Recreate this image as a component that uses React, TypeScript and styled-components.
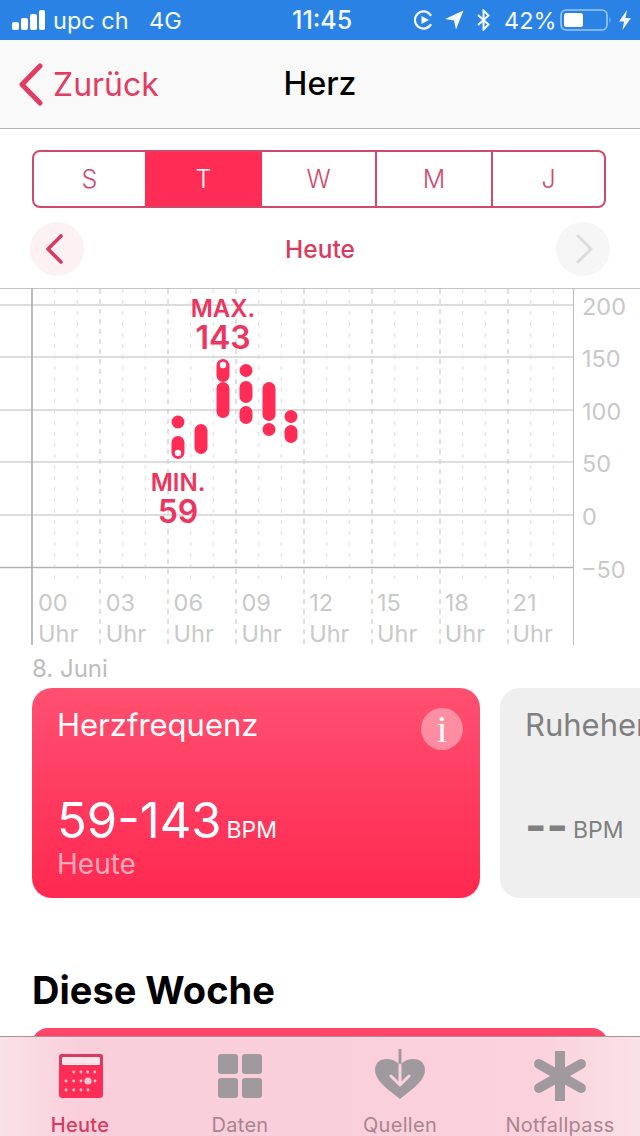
import React from "react";
import styled, { createGlobalStyle } from "styled-components";

const Global = createGlobalStyle`
  html, body { margin: 0; padding: 0; background: #fff; }
  body { font-family: Inter, Roboto, "Liberation Sans", sans-serif; }
  * { box-sizing: border-box; }
`;

const Page = styled.div`
  position: relative;
  width: 640px;
  height: 1136px;
  overflow: hidden;
  background: #fff;
`;

const StatusBar = styled.div`
  display: flex;
  align-items: center;
  height: 40px;
  padding: 0 9px 0 12px;
  background: #2a82e4;
  color: #f4f9ff;
  font-size: 23.5px;
`;
const StatusText = styled.span<{ $ml?: number; $w?: number; $weight?: number; $size?: number }>`
  margin-left: ${(p) => p.$ml ?? 0}px;
  width: ${(p) => (p.$w ? `${p.$w}px` : "auto")};
  font-weight: ${(p) => p.$weight ?? 400};
  font-size: ${(p) => (p.$size ? `${p.$size}px` : "inherit")};
  white-space: nowrap;
`;
const StatusIcon = styled.svg<{ $ml?: number }>`
  display: block;
  flex: none;
  margin-left: ${(p) => p.$ml ?? 0}px;
`;

const NavBar = styled.div`
  position: relative;
  display: flex;
  align-items: center;
  justify-content: center;
  height: 89px;
  background: #f9f9f9;
  border-bottom: 1px solid #b4b4b4;
`;
const BackLink = styled.div`
  position: absolute;
  left: 18px;
  top: 23px;
  display: flex;
  align-items: center;
  gap: 10px;
  color: #e23c62;
  font-size: 32px;
  line-height: 42px;
`;
const NavTitle = styled.div`
  color: #000;
  font-size: 32px;
  font-weight: 500;
  line-height: 42px;
`;

const Segments = styled.div`
  display: grid;
  grid-template-columns: 111px 117px 113px 116px 1fr;
  height: 58px;
  margin: 21px 34px 0 32px;
  border: 2px solid #cf4a6d;
  border-radius: 8px;
  overflow: hidden;
`;
const Segment = styled.div<{ $active?: boolean; $divider?: boolean }>`
  display: flex;
  align-items: center;
  justify-content: center;
  font-size: 25px;
  font-weight: 300;
  margin: ${(p) => (p.$active ? "-2px 0" : "0")};
  background: ${(p) => (p.$active ? "#ff2d55" : "transparent")};
  color: ${(p) => (p.$active ? "#fff" : "#cf4a6d")};
  border-left: ${(p) => (p.$divider ? "2px solid #cf4a6d" : "none")};
`;

const DayRow = styled.div`
  display: flex;
  align-items: center;
  justify-content: space-between;
  height: 54px;
  margin: 14px 30px 0 30px;
`;
const RoundButton = styled.div<{ $tone: string; $shift: number }>`
  display: flex;
  align-items: center;
  justify-content: center;
  width: 54px;
  height: 54px;
  padding-left: ${(p) => (p.$shift > 0 ? p.$shift : 0)}px;
  padding-right: ${(p) => (p.$shift < 0 ? -p.$shift : 0)}px;
  border-radius: 50%;
  background: ${(p) => p.$tone};
`;
const DayLabel = styled.div`
  color: #d93a60;
  font-size: 24.5px;
  font-weight: 500;
`;

const Chart = styled.svg`
  display: block;
  width: 640px;
  height: 357px;
  margin-top: 12px;
  overflow: visible;
`;
const AxisText = styled.text`
  fill: #c9c9c9;
  font-size: 23.5px;
  font-family: Inter, sans-serif;
`;
const MarkerText = styled.text<{ $size: number }>`
  fill: #ec3560;
  font-size: ${(p) => p.$size}px;
  font-weight: 600;
  font-family: Inter, sans-serif;
  text-anchor: middle;
`;

const DateLabel = styled.div`
  height: 43px;
  padding: 9px 0 0 32px;
  color: #bdbdbd;
  font-size: 24px;
  line-height: 30px;
`;

const CardRow = styled.div`
  display: flex;
  gap: 20px;
  padding-left: 32px;
  overflow: hidden;
`;
const Card = styled.div<{ $muted?: boolean }>`
  position: relative;
  flex: none;
  width: 448px;
  height: 210px;
  padding: 18px 25px 0;
  border-radius: 20px;
  background: ${(p) => (p.$muted ? "#efefef" : "linear-gradient(180deg, #ff5070 0%, #ff2850 100%)")};
  color: ${(p) => (p.$muted ? "#808080" : "#fff")};
`;
const CardTitle = styled.div`
  font-size: 31px;
  line-height: 38px;
  white-space: nowrap;
`;
const InfoBadge = styled.div`
  position: absolute;
  top: 20px;
  right: 17px;
  width: 42px;
  height: 42px;
  border-radius: 50%;
  display: flex;
  align-items: center;
  justify-content: center;
  background: rgba(255, 255, 255, 0.38);
  color: #fff;
  font-family: "Liberation Serif", serif;
  font-weight: 400;
  font-size: 38px;
`;
const ValueRow = styled.div`
  display: flex;
  align-items: baseline;
  gap: 5px;
  height: 60px;
  margin-top: 47px;
`;
const Value = styled.span`
  font-size: 49px;
  line-height: 60px;
`;
const DashValue = styled.span`
  font-size: 46px;
  font-weight: 700;
  line-height: 60px;
  transform: translateY(4px);
`;
const Unit = styled.span`
  font-size: 23px;
`;
const CardCaption = styled.div`
  color: #ffa9ba;
  font-size: 28px;
  line-height: 32px;
  margin-top: -3px;
`;

const SectionTitle = styled.h2`
  margin: 70px 0 0;
  padding-left: 32px;
  color: #000;
  font-size: 38px;
  font-weight: 700;
  line-height: 44px;
`;
const NextCard = styled.div`
  height: 60px;
  margin: 16px 32px 0;
  border-radius: 16px 16px 0 0;
  background: #ff4569;
`;

const TabBar = styled.nav`
  position: absolute;
  left: 0;
  right: 0;
  bottom: 0;
  height: 100px;
  display: grid;
  grid-template-columns: repeat(4, 160px);
  border-top: 1px solid rgba(90, 50, 60, 0.45);
  background: linear-gradient(90deg, #f9e2e7 0%, #facfdc 12%, #facfdc 50%, #fbd2dd 85%, #f9e2e7 100%);
`;
const Tab = styled.div<{ $active?: boolean }>`
  display: flex;
  flex-direction: column;
  align-items: center;
  color: ${(p) => (p.$active ? "#d93a60" : "#a8858f")};
  font-size: 20px;
  font-weight: ${(p) => (p.$active ? 500 : 400)};
  letter-spacing: 0.3px;
`;
const TabIcon = styled.svg`
  display: block;
  width: 60px;
  height: 60px;
  margin-top: 10px;
`;
const TabLabel = styled.span`
  line-height: 24px;
  margin-top: 6px;
  white-space: nowrap;
`;

const hourTicks = Array.from({ length: 23 }, (_, i) => i + 1);
const labels = ["00", "03", "06", "09", "12", "15", "18", "21"];
const yLabels: [string, number, number][] = [
  ["200", 582, 315],
  ["150", 582, 367],
  ["100", 582, 420],
  ["50", 582, 472],
  ["0", 582, 525],
  ["\u221250", 581, 578],
];
const yLines = [305, 357, 410, 462, 515];

type Pill = [number, number, number];
const pills: Pill[] = [
  [178, 415.5, 428.5],
  [178, 436, 459],
  [201, 424, 454],
  [223, 359, 382],
  [223, 382, 418],
  [246, 364, 377],
  [246, 381, 403],
  [246, 406, 424],
  [269, 382, 421],
  [269, 423, 436],
  [291, 410, 423],
  [291, 425, 443],
];

const HeartChart = () => (
  <Chart viewBox="0 288 640 357">
    <line x1="0" x2="640" y1="288.5" y2="288.5" stroke="#c4c4c4" strokeWidth="1" />
    {hourTicks.map((h) => {
      const x = 32 + (h * 68) / 3;
      const major = h % 3 === 0;
      return (
        <line
          key={h}
          x1={x}
          x2={x}
          y1="289"
          y2={major ? 645 : 580}
          stroke={major ? "#cccccc" : "#e4e4e4"}
          strokeWidth="1.2"
          strokeDasharray={major ? "5 5" : "4 7"}
        />
      );
    })}
    {yLines.map((y) => (
      <line key={y} x1="0" x2="573" y1={y} y2={y} stroke="#d2d2d2" strokeWidth="1.4" />
    ))}
    <line x1="0" x2="573" y1="567.5" y2="567.5" stroke="#b4b4b4" strokeWidth="1.5" />
    <line x1="32" x2="32" y1="288" y2="645" stroke="#ababab" strokeWidth="1.6" />
    <line x1="573.5" x2="573.5" y1="288" y2="645" stroke="#bdbdbd" strokeWidth="1" />
    {yLabels.map(([t, x, y]) => (
      <AxisText key={t} x={x} y={y}>{t}</AxisText>
    ))}
    {labels.map((t, i) => (
      <g key={t}>
        <AxisText x={38 + i * 67.8} y={611}>{t}</AxisText>
        <AxisText x={38 + i * 67.8} y={642}>Uhr</AxisText>
      </g>
    ))}
    {pills.map(([x, y1, y2], i) => (
      <rect key={i} x={x - 6.5} y={y1} width="13" height={y2 - y1} rx="6.5" fill="#ff2d55" />
    ))}
    <circle cx="178" cy="453" r="3.2" fill="#fff" />
    <circle cx="223" cy="365" r="3.2" fill="#fff" />
    <MarkerText $size={24} x="223" y="317">MAX.</MarkerText>
    <MarkerText $size={32} x="223" y="349">143</MarkerText>
    <MarkerText $size={24} x="178" y="491">MIN.</MarkerText>
    <MarkerText $size={32} x="178" y="523">59</MarkerText>
  </Chart>
);

const calDots: [number, number, number][] = [
  [72.7, 1072, 1.4], [80, 1072, 1.4], [86.7, 1072, 1.4], [93.7, 1072, 1.4],
  [65, 1081, 1.4], [72.7, 1081, 1.4], [80, 1081, 1.4], [87, 1081, 3.6], [94, 1081, 1.4],
  [65, 1090, 1.4], [72.7, 1090, 1.4], [80, 1090, 1.4], [87, 1090, 1.4],
];

export default function App() {
  return (
    <Page>
      <Global />
      <StatusBar>
        <StatusIcon width="33" height="20" viewBox="0 0 33 20" fill="#fff">
          <rect x="0" y="12" width="7" height="8" rx="2" />
          <rect x="9" y="8" width="7" height="12" rx="2" />
          <rect x="18" y="4" width="7" height="16" rx="2" />
          <rect x="27" y="0" width="6" height="20" rx="2" />
        </StatusIcon>
        <StatusText $ml={8} $w={96}>upc ch</StatusText>
        <StatusText $w={143}>4G</StatusText>
        <StatusText $w={122} $weight={500} $size={25}>11:45</StatusText>
        <StatusIcon width="20" height="20" viewBox="0 0 20 20" fill="none">
          <path d="M16.5 5 A8.6 8.6 0 1 0 16.5 15" stroke="#f4f9ff" strokeWidth="2.2" strokeLinecap="round" />
          <path d="M7.5 6 L15 10 L7.5 14 Z" fill="#f4f9ff" />
        </StatusIcon>
        <StatusIcon $ml={11} width="19" height="20" viewBox="0 0 19 20" fill="#f4f9ff">
          <path d="M18.5 0.5 L11 19.5 L9 10.5 L0 9 Z" />
        </StatusIcon>
        <StatusIcon $ml={12} width="15" height="22" viewBox="0 0 15 22" fill="none" stroke="#f4f9ff" strokeWidth="2">
          <path d="M2 6 L12.5 15.5 L7.5 20.5 V1.5 L12.5 6.5 L2 16" />
        </StatusIcon>
        <StatusText $ml={13} $w={56}>42%</StatusText>
        <StatusIcon width="52" height="22" viewBox="0 0 52 22" fill="none">
          <rect x="1" y="1" width="46" height="20" rx="5" stroke="#9cc6f4" strokeWidth="1.6" />
          <rect x="4" y="4" width="19" height="14" rx="2.5" fill="#fff" />
          <path d="M49.5 8 Q51.5 11 49.5 14 Z" fill="#9cc6f4" />
        </StatusIcon>
        <StatusIcon $ml={7} width="12" height="20" viewBox="0 0 12 20" fill="#f4f9ff">
          <path d="M8 0 L0 11.5 H5 L3.5 20 L12 8 H6.5 Z" />
        </StatusIcon>
      </StatusBar>

      <NavBar>
        <BackLink>
          <svg width="25" height="43" viewBox="0 0 25 43" fill="none">
            <path d="M22 3 L4 21.5 L22 40" stroke="#e23c62" strokeWidth="5" strokeLinecap="round" strokeLinejoin="round" />
          </svg>
          <span>Zurück</span>
        </BackLink>
        <NavTitle>Herz</NavTitle>
      </NavBar>

      <Segments>
        <Segment>S</Segment>
        <Segment $active>T</Segment>
        <Segment>W</Segment>
        <Segment $divider>M</Segment>
        <Segment $divider>J</Segment>
      </Segments>

      <DayRow>
        <RoundButton $tone="#fdf1f3" $shift={-6}>
          <svg width="20" height="30" viewBox="0 0 20 30" fill="none">
            <path d="M17 2 L4 15 L17 28" stroke="#d93a60" strokeWidth="3.6" strokeLinecap="round" strokeLinejoin="round" />
          </svg>
        </RoundButton>
        <DayLabel>Heute</DayLabel>
        <RoundButton $tone="#f6f6f7" $shift={4}>
          <svg width="20" height="30" viewBox="0 0 20 30" fill="none">
            <path d="M3 2 L16 15 L3 28" stroke="#dcdcde" strokeWidth="3" strokeLinecap="round" strokeLinejoin="round" />
          </svg>
        </RoundButton>
      </DayRow>

      <HeartChart />

      <DateLabel>8. Juni</DateLabel>

      <CardRow>
        <Card>
          <CardTitle>Herzfrequenz</CardTitle>
          <InfoBadge>i</InfoBadge>
          <ValueRow>
            <Value>59-143</Value>
            <Unit>BPM</Unit>
          </ValueRow>
          <CardCaption>Heute</CardCaption>
        </Card>
        <Card $muted>
          <CardTitle>Ruheherzfrequenz</CardTitle>
          <ValueRow>
            <DashValue>--</DashValue>
            <Unit>BPM</Unit>
          </ValueRow>
        </Card>
      </CardRow>

      <SectionTitle>Diese Woche</SectionTitle>
      <NextCard />

      <TabBar>
        <Tab $active>
          <TabIcon viewBox="49 1047 60 60">
            <rect x="58" y="1054" width="44" height="44" rx="3.5" fill="#ff2d55" />
            <rect x="58" y="1054" width="44" height="12" rx="3" fill="#d93a60" />
            <rect x="61" y="1057" width="38" height="8" rx="1" fill="#fbe3e9" />
            {calDots.map(([x, y, r], i) => (
              <circle key={i} cx={x} cy={y} r={r} fill="#ffc9d5" />
            ))}
          </TabIcon>
          <TabLabel>Heute</TabLabel>
        </Tab>
        <Tab>
          <TabIcon viewBox="0 0 60 60">
            <rect x="8" y="7" width="20" height="20" rx="3" fill="#a09a9e" />
            <rect x="32" y="7" width="20" height="20" rx="3" fill="#a09a9e" />
            <rect x="8" y="31" width="20" height="20" rx="3" fill="#a09a9e" />
            <rect x="32" y="31" width="20" height="20" rx="3" fill="#a09a9e" />
          </TabIcon>
          <TabLabel>Daten</TabLabel>
        </Tab>
        <Tab>
          <TabIcon viewBox="0 0 60 60">
            <path d="M30 52 C22 45 5 35 5 23 C5 15 11 12 17 12 C23 12 27 15 30 18 C33 15 37 12 43 12 C49 12 55 15 55 23 C55 35 38 45 30 52 Z" fill="#a09a9e" />
            <line x1="30" y1="2" x2="30" y2="18" stroke="#a09a9e" strokeWidth="3" />
            <path d="M30 18 V38 M21 29 L30 38 L39 29" stroke="#f8d2dc" strokeWidth="3" fill="none" strokeLinecap="round" strokeLinejoin="round" />
          </TabIcon>
          <TabLabel>Quellen</TabLabel>
        </Tab>
        <Tab>
          <TabIcon viewBox="0 0 60 60">
            <g stroke="#a09a9e" strokeWidth="10">
              <line x1="30" y1="4" x2="30" y2="54" />
              <line x1="9" y1="17" x2="51" y2="41" strokeLinecap="round" />
              <line x1="9" y1="41" x2="51" y2="17" strokeLinecap="round" />
            </g>
          </TabIcon>
          <TabLabel>Notfallpass</TabLabel>
        </Tab>
      </TabBar>
    </Page>
  );
}
